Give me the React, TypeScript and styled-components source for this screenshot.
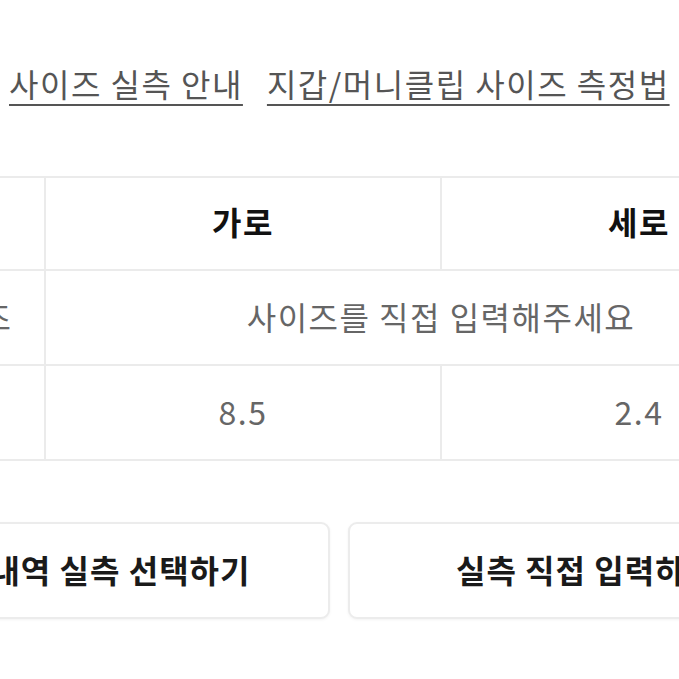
import styled, { createGlobalStyle } from 'styled-components'

const GlobalStyle = createGlobalStyle`
  html, body {
    margin: 0;
    padding: 0;
    background: #fff;
  }
  body {
    font-family: "Noto Sans CJK KR", "Noto Sans", sans-serif;
  }
`

const Page = styled.div`
  width: 679px;
  height: 679px;
  overflow: hidden;
  background: #fff;
`

// the screenshot is a crop of a wider sheet, so the sheet starts left of the window
const Sheet = styled.div`
  width: 950px;
  margin-left: -114px;
  padding-top: 60px;
  letter-spacing: 1.5px;
`

const GuideLinks = styled.div`
  display: flex;
  gap: 24px;
  padding-left: 123px;
`

const GuideLink = styled.a`
  font-size: 32px;
  line-height: 46px;
  color: #555;
  text-decoration: underline;
  text-decoration-thickness: 2px;
  text-underline-offset: 7px;
  white-space: nowrap;
  cursor: pointer;
`

const SizeTable = styled.table`
  margin-top: 70px;
  width: 950px;
  table-layout: fixed;
  border-collapse: collapse;
  font-size: 32px;
`

const Cell = styled.td<{ $head?: boolean; $rowHeight: number }>`
  height: ${(p) => p.$rowHeight}px;
  padding: 0 0 ${(p) => (p.$head ? 6 : 4)}px;
  border: 2px solid #ebebeb;
  text-align: center;
  vertical-align: middle;
  white-space: nowrap;
  color: ${(p) => (p.$head ? '#111' : '#666')};
  font-weight: ${(p) => (p.$head ? 700 : 400)};
`

const ButtonRow = styled.div`
  display: flex;
  gap: 18px;
  margin-top: 61px;
  margin-left: -36px;
`

const ActionButton = styled.button<{ $width: number }>`
  width: ${(p) => p.$width}px;
  height: 97px;
  flex: none;
  padding: 0 0 4px;
  background: #fff;
  border: 2px solid #ececec;
  border-radius: 9px;
  box-shadow: 0 1px 3px rgba(0, 0, 0, 0.05);
  font-family: inherit;
  font-size: 32px;
  font-weight: 700;
  letter-spacing: 1px;
  color: #1a1a1a;
  white-space: nowrap;
  cursor: pointer;
`

export default function App() {
  return (
    <Page>
      <GlobalStyle />
      <Sheet>
        <GuideLinks>
          <GuideLink>사이즈 실측 안내</GuideLink>
          <GuideLink>지갑/머니클립 사이즈 측정법</GuideLink>
        </GuideLinks>

        <SizeTable>
          <colgroup>
            <col style={{ width: 158 }} />
            <col style={{ width: 396 }} />
            <col style={{ width: 396 }} />
          </colgroup>
          <tbody>
            <tr>
              <Cell $head $rowHeight={85} />
              <Cell $head $rowHeight={85}>가로</Cell>
              <Cell $head $rowHeight={85}>세로</Cell>
            </tr>
            <tr>
              <Cell $rowHeight={89}>사이즈</Cell>
              <Cell $rowHeight={89} colSpan={2}>
                사이즈를 직접 입력해주세요
              </Cell>
            </tr>
            <tr>
              <Cell $rowHeight={89} />
              <Cell $rowHeight={89}>8.5</Cell>
              <Cell $rowHeight={89}>2.4</Cell>
            </tr>
          </tbody>
        </SizeTable>

        <ButtonRow>
          <ActionButton $width={480}>구매내역 실측 선택하기</ActionButton>
          <ActionButton $width={476}>실측 직접 입력하기</ActionButton>
        </ButtonRow>
      </Sheet>
    </Page>
  )
}
